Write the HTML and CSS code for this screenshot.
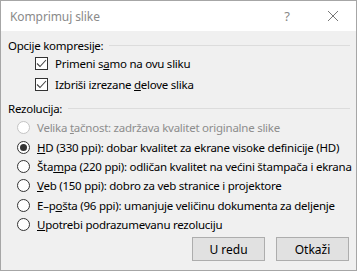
FILE: index.html
```html
<!DOCTYPE html>
<html lang="sr">
  <head>
    <meta charset="UTF-8" />
    <title>Komprimuj slike</title>
    <link rel="stylesheet" href="styles.css">
  </head>
  <body>
    <div class="window">
      <div class="titlebar">
        <span class="title">Komprimuj slike</span>
        <span class="help">?</span>
        <span class="close">
          <svg width="12" height="12" viewBox="0 0 12 12"><path d="M1 1 L11 11 M11 1 L1 11" stroke="#777" stroke-width="1" fill="none"/></svg>
        </span>
      </div>

      <div class="content">
        <div class="group-title"><span>Opcije kompresije:</span></div>
        <div class="checks">
          <label class="check"><span class="box"><svg width="11" height="9" viewBox="0 0 11 9"><path d="M1 4.5 L4 7.5 L10 1" stroke="#444" stroke-width="1.1" fill="none"/></svg></span><span>Primeni s<u>a</u>mo na ovu sliku</span></label>
          <label class="check"><span class="box"><svg width="11" height="9" viewBox="0 0 11 9"><path d="M1 4.5 L4 7.5 L10 1" stroke="#444" stroke-width="1.1" fill="none"/></svg></span><span>Izbriši izrezane <u>d</u>elove slika</span></label>
        </div>

        <div class="group-title"><span>Rezolucija:</span></div>
        <div class="radios">
          <label class="radio disabled"><span class="dot"></span><span>Velika <u>t</u>ačnost: zadržava kvalitet originalne slike</span></label>
          <label class="radio checked"><span class="dot"></span><span><u>H</u>D (330 ppi): dobar kvalitet za ekrane visoke definicije (HD)</span></label>
          <label class="radio"><span class="dot"></span><span>Šta<u>m</u>pa (220 ppi): odličan kvalitet na većini štampača i ekrana</span></label>
          <label class="radio"><span class="dot"></span><span><u>V</u>eb (150 ppi): dobro za veb stranice i projektore</span></label>
          <label class="radio"><span class="dot"></span><span>E–p<u>o</u>šta (96 ppi): umanjuje veličinu dokumenta za deljenje</span></label>
          <label class="radio"><span class="dot"></span><span><u>U</u>potrebi podrazumevanu rezoluciju</span></label>
        </div>

        <div class="buttons">
          <button class="btn">U redu</button>
          <button class="btn">Otkaži</button>
        </div>
      </div>
    </div>
  </body>
</html>
```

FILE: styles.css
```css
* {
  margin: 0;
  padding: 0;
  box-sizing: border-box;
}

body {
  font-family: "Noto Sans", "Open Sans", sans-serif;
  font-size: 11.5px;
  letter-spacing: -0.25px;
  color: #000;
  background: #fff;
}

.window {
  width: 357px;
  height: 271px;
  border: 1px solid #a6a6a6;
  display: flex;
  flex-direction: column;
}

.titlebar {
  height: 30px;
  background: #fff;
  display: flex;
  align-items: center;
  padding-left: 9px;
}

.title {
  flex: 1;
  color: #8a8a8a;
  font-size: 12px;
  letter-spacing: -0.1px;
}

.help {
  color: #888;
  font-size: 13px;
  width: 46px;
  text-align: center;
}

.close {
  width: 46px;
  display: flex;
  justify-content: center;
}

.content {
  flex: 1;
  background: #f0f0f0;
  padding: 6px 6px 0 7px;
}

.group-title {
  display: flex;
  align-items: center;
  height: 16px;
  gap: 6px;
  white-space: nowrap;
}

.group-title::after {
  content: "";
  flex: 1;
  height: 1px;
  background: #dcdcdc;
}

.checks {
  padding: 0 0 5px 27px;
}

.check,
.radio {
  display: flex;
  align-items: center;
  white-space: nowrap;
}

.check {
  height: 21px;
}

.box {
  flex: none;
  width: 13px;
  height: 13px;
  border: 1px solid #333;
  background: #fff;
  display: flex;
  align-items: center;
  justify-content: center;
  margin-right: 7px;
}

.radios {
  padding: 2px 0 0 9px;
}

.radio {
  height: 19.4px;
}

.dot {
  flex: none;
  width: 13px;
  height: 13px;
  border: 1px solid #333;
  border-radius: 50%;
  background: #fff;
  margin-right: 7px;
  display: flex;
  align-items: center;
  justify-content: center;
}

.checked .dot::after {
  content: "";
  width: 7px;
  height: 7px;
  border-radius: 50%;
  background: #333;
}

.disabled {
  color: #8d8d8d;
}

.disabled .dot {
  border-color: #c4c4c4;
}

.buttons {
  display: flex;
  justify-content: flex-end;
  gap: 11px;
  padding: 3px 1px 0 0;
}

.btn {
  width: 73px;
  height: 24px;
  background: #e1e1e1;
  border: 1px solid #adadad;
  font-family: inherit;
  font-size: 12px;
  letter-spacing: 0;
  color: #000;
}
```
